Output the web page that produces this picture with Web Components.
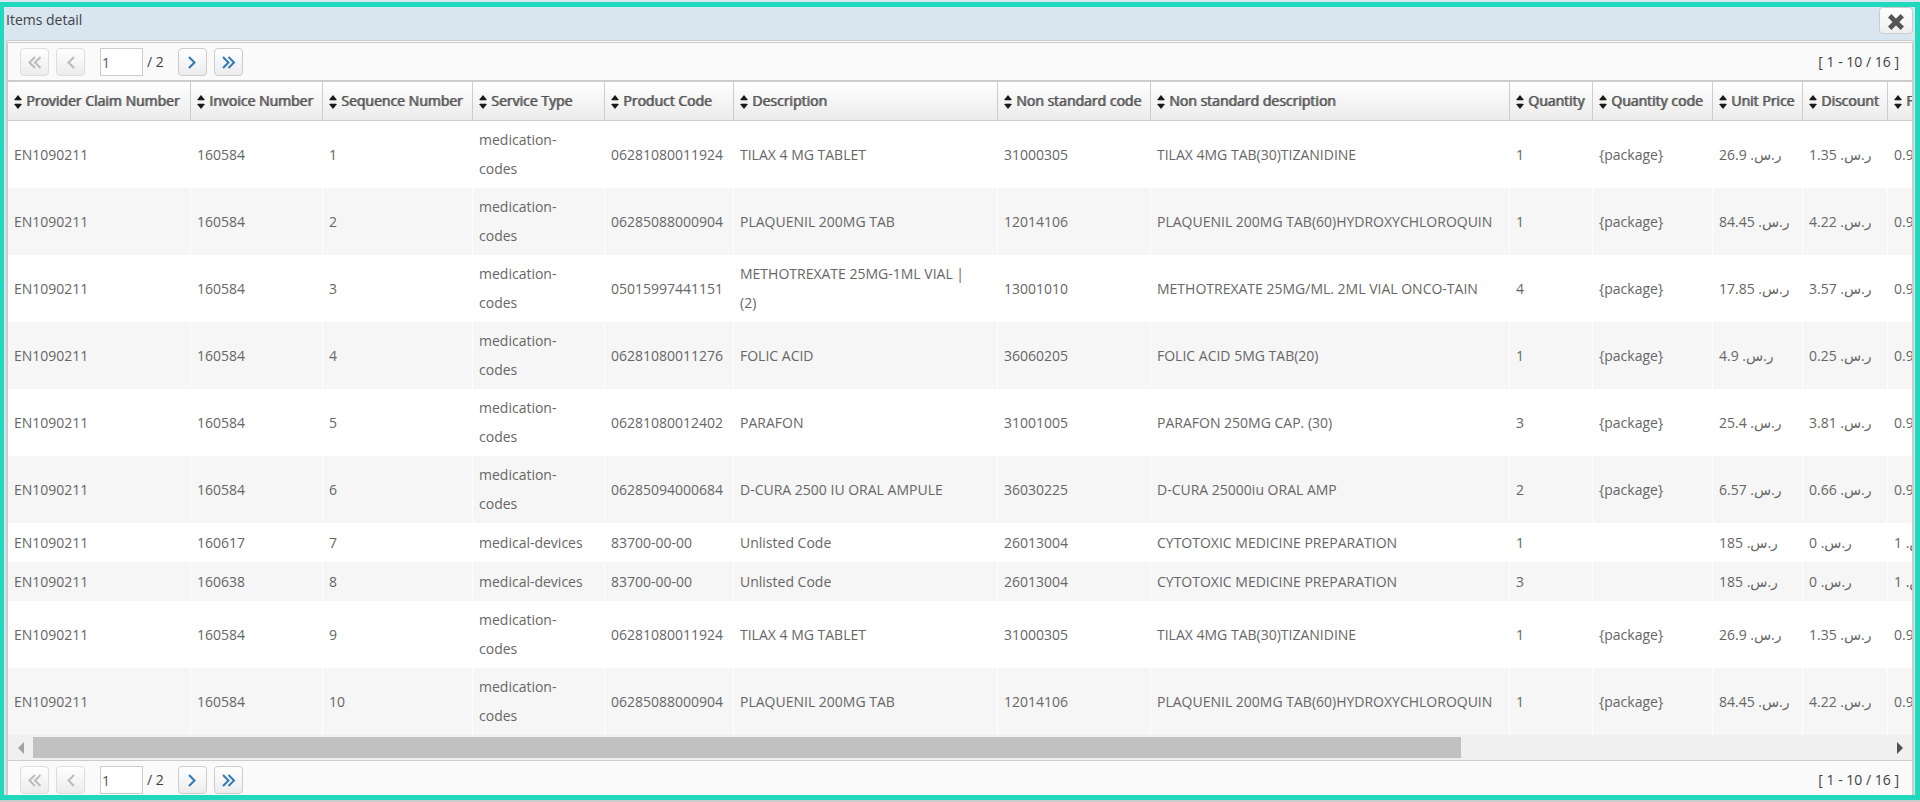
<!DOCTYPE html>
<html lang="en">
<head>
<meta charset="utf-8">
<title>Items detail</title>
<style>
html, body { margin: 0; }
body {
  background: #d9e5ef;
  font-family: "Open Sans", "DejaVu Sans", sans-serif;
  font-size: 14px;
  color: #3f3f3f;
}
</style>
</head>
<body>
<items-dialog heading="Items detail">
  <pager-bar page="1" pages="2" range="[ 1 - 10 / 16 ]"></pager-bar>
  <items-table></items-table>
  <pager-bar flush page="1" pages="2" range="[ 1 - 10 / 16 ]"></pager-bar>
</items-dialog>

<script>
class ItemsDialog extends HTMLElement {
  constructor() {
    super();
    this.attachShadow({ mode: "open" }).innerHTML = `
<style>
:host { display: block; padding-top: 2px; border-bottom: 2px solid #ccc; }
section { border: 5px solid #20d8bb; border-left-width: 4px; background: #d9e5ef; }
header { display: flex; justify-content: space-between; align-items: flex-start; height: 33px; padding: 0 2px; }
h1 { margin: 0; font: inherit; line-height: 26px; color: #404448; }
button {
  display: grid; place-items: center; width: 34px; height: 27px; padding: 2px 0 0; box-sizing: border-box;
  border: 1px solid #ccc; border-radius: 4px; background: linear-gradient(#fff, #eee);
}
svg { display: block; }
.panel { margin: 0 1px 0 2px; border: 1px solid #ccc; border-bottom: 0; background: #fff; }
.inner { margin-top: 1px; border: 1px solid #ccc; border-bottom: 0; }
</style>
<section>
  <header>
    <h1></h1>
    <button type="button" aria-label="Close">
      <svg width="16" height="16" viewBox="0 0 16 16"><path d="M3.400 3.400L12.600 12.600M12.600 3.400L3.400 12.600" stroke="#555" stroke-width="4.800" stroke-linecap="square" stroke-linejoin="round"/></svg>
    </button>
  </header>
  <div class="panel"><div class="inner"><slot></slot></div></div>
</section>`;
    this.shadowRoot.querySelector("h1").textContent = this.getAttribute("heading");
  }
}

const CHEVRONS = {
  first: "M13 3L7.500 8.500L13 14M18.500 3L13 8.500L18.500 14",
  prev: "M16 3L10.500 8.500L16 14",
  next: "M10 3L15.500 8.500L10 14",
  last: "M8 3L13.500 8.500L8 14M13.500 3L19 8.500L13.500 14"
};

class PagerBar extends HTMLElement {
  constructor() {
    super();
    const button = (kind, label, off) => `
<button type="button" aria-label="${label}" ${off ? "disabled" : ""}>
  <svg width="26" height="17" viewBox="0 0 26 17"><path d="${CHEVRONS[kind]}" fill="none" stroke="currentColor" stroke-width="2"/></svg>
</button>`;
    this.attachShadow({ mode: "open" }).innerHTML = `
<style>
:host { display: flex; align-items: center; gap: 7px; padding: 5px 12px 4px; background: #fafafa; }
:host([flush]) { padding-bottom: 1px; }
button {
  display: grid; place-items: center; width: 29px; height: 28px; padding: 1px 0 0; box-sizing: border-box;
  border: 1px solid #ccc; border-radius: 4px; background: linear-gradient(#fff, #ececec); color: #3079b5;
}
button:disabled { border-color: #ddd; color: #bbb; }
label { display: flex; align-items: center; gap: 4px; margin: 0 7px 0 8px; line-height: 26px; }
input {
  width: 43px; height: 28px; box-sizing: border-box; padding: 0 1px; margin: 0;
  border: 1px solid #ccc; border-radius: 0; background: #fff; font: inherit; color: #555;
}
span, output { padding-bottom: 1px; }
output { margin-left: auto; padding-right: 1px; }
svg { display: block; }
</style>
${button("first", "First page", true)}${button("prev", "Previous page", true)}
<label><input type="text" aria-label="Page" value="${this.getAttribute("page")}"><span>/ ${this.getAttribute("pages")}</span></label>
${button("next", "Next page")}${button("last", "Last page")}
<output>${this.getAttribute("range")}</output>`;
  }
}

const COLUMNS = [
  ["Provider Claim Number", 183], ["Invoice Number", 132], ["Sequence Number", 150],
  ["Service Type", 132], ["Product Code", 129], ["Description", 264],
  ["Non standard code", 153], ["Non standard description", 359], ["Quantity", 83],
  ["Quantity code", 120], ["Unit Price", 90], ["Discount", 85], ["Factor", 590]
];
const MED = "medication-\ncodes", DEV = "medical-devices", PKG = "{package}";
const ROWS = [
  ["160584", MED, "06281080011924", "TILAX 4 MG TABLET", "31000305", "TILAX 4MG TAB(30)TIZANIDINE", 1, PKG, "26.9", "1.35", "0.95"],
  ["160584", MED, "06285088000904", "PLAQUENIL 200MG TAB", "12014106", "PLAQUENIL 200MG TAB(60)HYDROXYCHLOROQUIN", 1, PKG, "84.45", "4.22", "0.95"],
  ["160584", MED, "05015997441151", "METHOTREXATE 25MG-1ML VIAL |\n(2)", "13001010", "METHOTREXATE 25MG/ML. 2ML VIAL ONCO-TAIN", 4, PKG, "17.85", "3.57", "0.95"],
  ["160584", MED, "06281080011276", "FOLIC ACID", "36060205", "FOLIC ACID 5MG TAB(20)", 1, PKG, "4.9", "0.25", "0.95"],
  ["160584", MED, "06281080012402", "PARAFON", "31001005", "PARAFON 250MG CAP. (30)", 3, PKG, "25.4", "3.81", "0.95"],
  ["160584", MED, "06285094000684", "D-CURA 2500 IU ORAL AMPULE", "36030225", "D-CURA 25000iu ORAL AMP", 2, PKG, "6.57", "0.66", "0.95"],
  ["160617", DEV, "83700-00-00", "Unlisted Code", "26013004", "CYTOTOXIC MEDICINE PREPARATION", 1, "", "185", "0", "1"],
  ["160638", DEV, "83700-00-00", "Unlisted Code", "26013004", "CYTOTOXIC MEDICINE PREPARATION", 3, "", "185", "0", "1"],
  ["160584", MED, "06281080011924", "TILAX 4 MG TABLET", "31000305", "TILAX 4MG TAB(30)TIZANIDINE", 1, PKG, "26.9", "1.35", "0.95"],
  ["160584", MED, "06285088000904", "PLAQUENIL 200MG TAB", "12014106", "PLAQUENIL 200MG TAB(60)HYDROXYCHLOROQUIN", 1, PKG, "84.45", "4.22", "0.95"]
];
const riyal = (n) => `ر.س.\u200f ${n}`;

class SortLabel extends HTMLElement {
  constructor() {
    super();
    this.attachShadow({ mode: "open" }).innerHTML = `
<style>
:host { display: flex; align-items: center; gap: 4px; white-space: nowrap; }
svg { flex: none; margin-top: 4px; }
span { text-shadow: 1px 0 0 #777; }
</style>
<svg width="8" height="14" viewBox="0 0 8 14"><path d="M1 5H7V6H1ZM1 8H7V9H1Z" fill="#b5b5b5"/><path d="M4 0L8 5H0Z M4 14L8 9H0Z" fill="#1a1a1a"/></svg>
<span><slot></slot></span>`;
  }
}

class ItemsTable extends HTMLElement {
  constructor() {
    super();
    const body = ROWS.map((r, i) => {
      const cells = ["EN1090211", r[0], i + 1, ...r.slice(1, 8), ...r.slice(8).map(riyal)];
      return `<tr>${cells.map((c) => `<td>${c}</td>`).join("")}</tr>`;
    }).join("");
    this.attachShadow({ mode: "open" }).innerHTML = `
<style>
:host { display: block; border-top: 2px solid #ccc; border-bottom: 1px solid #ccc; background: #fff; }
.view { overflow: hidden; }
table { table-layout: fixed; border-collapse: separate; border-spacing: 0; width: 2470px; color: #666; }
th, td { box-sizing: border-box; text-align: left; vertical-align: middle; border-right: 1px solid #fff; }
th { height: 39px; padding: 0 0 2px 6px; border-right-color: #ccc; border-bottom: 1px solid #ccc; background: linear-gradient(#fff, #ebebeb); font-weight: 400; color: #555; }
td { height: 39px; padding: 4px 0 5px 6px; line-height: 29px; white-space: pre; }
tbody tr:nth-child(even) { background: #f6f6f6; }
</style>
<div class="view">
  <table>
    <colgroup>${COLUMNS.map((c) => `<col style="width:${c[1]}px">`).join("")}</colgroup>
    <thead><tr>${COLUMNS.map((c) => `<th scope="col"><sort-label>${c[0]}</sort-label></th>`).join("")}</tr></thead>
    <tbody>${body}</tbody>
  </table>
</div>
<scroll-track></scroll-track>`;
    const view = this.shadowRoot.querySelector(".view");
    this.shadowRoot.querySelector("scroll-track").addEventListener("step", (e) => { view.scrollLeft += e.detail; });
  }
}

class ScrollTrack extends HTMLElement {
  constructor() {
    super();
    this.attachShadow({ mode: "open" }).innerHTML = `
<style>
:host { display: flex; align-items: center; height: 25px; background: #f0f0f0; }
button { flex: none; display: grid; place-items: center; width: 25px; height: 25px; padding: 0; border: 0; background: none; }
.track { flex: 1; }
.thumb { width: 77%; height: 21px; background: #c1c1c1; }
</style>
<button type="button" aria-label="Scroll left"><svg width="6" height="12" viewBox="0 0 6 12"><path d="M6 0V12L0 6Z" fill="#a3a3a3"/></svg></button>
<div class="track"><div class="thumb"></div></div>
<button type="button" aria-label="Scroll right"><svg width="6" height="12" viewBox="0 0 6 12"><path d="M0 0V12L6 6Z" fill="#505050"/></svg></button>`;
    const [left, right] = this.shadowRoot.querySelectorAll("button");
    const step = (n) => this.dispatchEvent(new CustomEvent("step", { detail: n }));
    left.addEventListener("click", () => step(-80));
    right.addEventListener("click", () => step(80));
  }
}

customElements.define("scroll-track", ScrollTrack);
customElements.define("sort-label", SortLabel);
customElements.define("pager-bar", PagerBar);
customElements.define("items-table", ItemsTable);
customElements.define("items-dialog", ItemsDialog);
</script>
</body>
</html>
